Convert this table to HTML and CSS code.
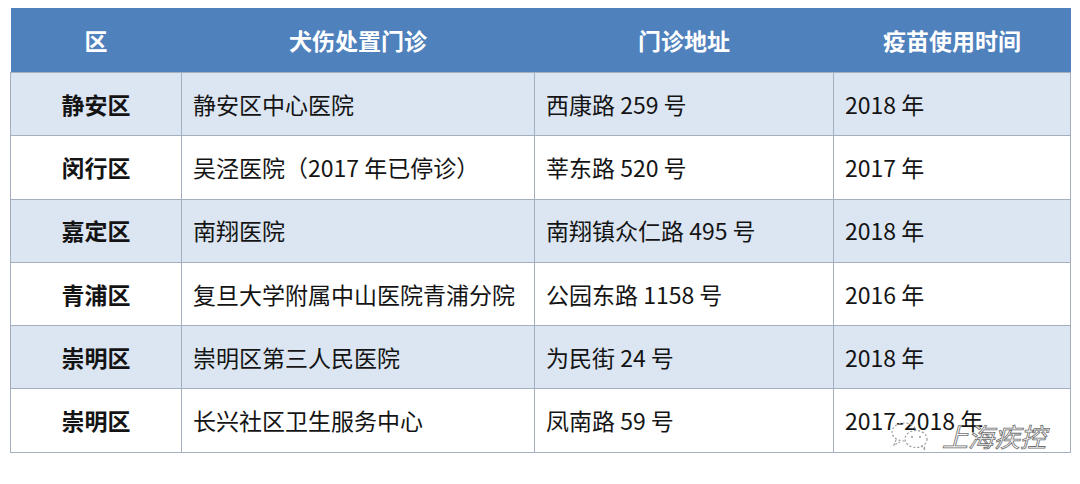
FILE: index.html
```html
<!DOCTYPE html>
<html lang="zh-CN">
<head>
<meta charset="utf-8">
<link rel="stylesheet" href="styles.css">
</head>
<body>
<div class="wrap">
  <table class="grid">
    <colgroup>
      <col class="c1"><col class="c2"><col class="c3"><col class="c4">
    </colgroup>
    <thead>
      <tr>
        <th>区</th><th>犬伤处置门诊</th><th>门诊地址</th><th>疫苗使用时间</th>
      </tr>
    </thead>
    <tbody>
      <tr class="alt"><td class="dist">静安区</td><td>静安区中心医院</td><td>西康路 259 号</td><td>2018 年</td></tr>
      <tr><td class="dist">闵行区</td><td>吴泾医院（2017 年已停诊）</td><td>莘东路 520 号</td><td>2017 年</td></tr>
      <tr class="alt"><td class="dist">嘉定区</td><td>南翔医院</td><td>南翔镇众仁路 495 号</td><td>2018 年</td></tr>
      <tr><td class="dist">青浦区</td><td>复旦大学附属中山医院青浦分院</td><td>公园东路 1158 号</td><td>2016 年</td></tr>
      <tr class="alt"><td class="dist">崇明区</td><td>崇明区第三人民医院</td><td>为民街 24 号</td><td>2018 年</td></tr>
      <tr><td class="dist">崇明区</td><td>长兴社区卫生服务中心</td><td>凤南路 59 号</td><td>2017-2018 年</td></tr>
    </tbody>
  </table>
  <div class="mark">
    <svg class="mark-logo" width="42" height="30" viewBox="0 0 42 30">
      <ellipse cx="14" cy="11" rx="12" ry="9" fill="none" stroke="#9a9a9a" stroke-width="1.2" stroke-dasharray="2 2"/>
      <ellipse cx="26" cy="18" rx="11" ry="8.5" fill="#fff" stroke="#9a9a9a" stroke-width="1.2" stroke-dasharray="2 2"/>
      <path d="M6 19 L4 24 L10 21" fill="none" stroke="#9a9a9a" stroke-width="1.1" stroke-dasharray="2 1.5"/>
      <path d="M31 25 L35 29 L34 24" fill="none" stroke="#9a9a9a" stroke-width="1.1" stroke-dasharray="2 1.5"/>
      <circle cx="22" cy="16" r="1" fill="#9a9a9a"/>
      <circle cx="30" cy="16" r="1" fill="#9a9a9a"/>
    </svg>
    <span class="mark-text">上海疾控</span>
  </div>
</div>
</body>
</html>
```

FILE: styles.css
```css
html, body {
  margin: 0;
  padding: 0;
  background: #ffffff;
}

body {
  font-family: "Noto Sans CJK SC", "Noto Sans", sans-serif;
  color: #141414;
}

.wrap {
  position: relative;
  width: 1060px;
  margin: 8px 0 0 10px;
}

.grid {
  width: 1060px;
  border-collapse: collapse;
  table-layout: fixed;
}

.c1 { width: 171px; }
.c2 { width: 353px; }
.c3 { width: 299px; }
.c4 { width: 237px; }

.grid th {
  height: 64px;
  padding: 0;
  background: #4f81bd;
  color: #ffffff;
  font-size: 23px;
  font-weight: 700;
  text-align: center;
  vertical-align: middle;
  border: none;
}

.grid td {
  height: 62.3px;
  padding: 0 0 0 11px;
  font-size: 23px;
  line-height: 1;
  vertical-align: middle;
  border: 1px solid #a3aebf;
  white-space: nowrap;
}

.grid tbody tr.alt td {
  background: #dce6f2;
}

.grid td.dist {
  padding: 0;
  text-align: center;
  font-weight: 700;
}

.mark {
  position: absolute;
  left: 880px;
  top: 409px;
  display: flex;
  align-items: center;
  gap: 10px;
}

.mark-text {
  font-size: 26px;
  font-weight: 400;
  color: #ffffff;
  -webkit-text-stroke: 0.8px #6e6e6e;
  font-style: italic;
}
```
